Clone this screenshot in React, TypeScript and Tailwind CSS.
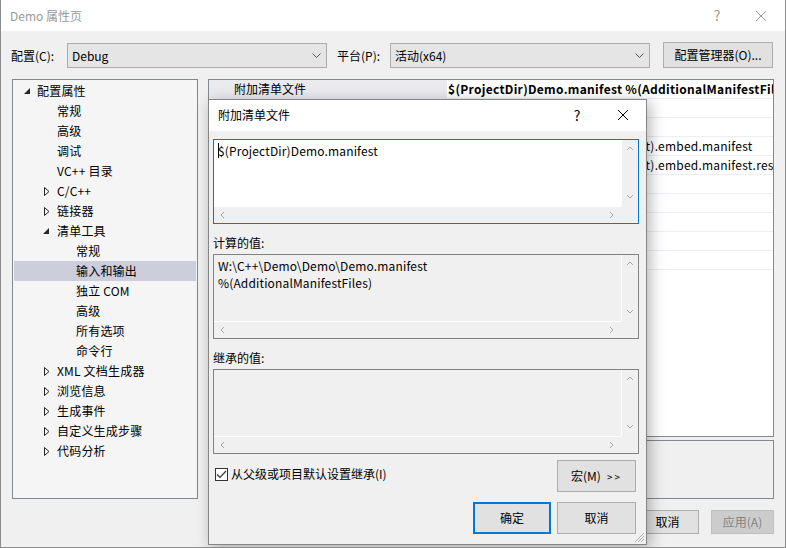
import React from "react";

const FONT = "font-['Noto_Sans_CJK_SC',sans-serif]";

function Chevron({ dir, color = "#a6a6a6" }: { dir: "up" | "down" | "left" | "right"; color?: string }) {
  const pts: Record<string, string> = {
    up: "1,5 4,2 7,5",
    down: "1,2 4,5 7,2",
    left: "5,1 2,4 5,7",
    right: "2,1 5,4 2,7",
  };
  return (
    <svg width="8" height="8" viewBox="0 0 8 8" className="block">
      <polyline points={pts[dir]} fill="none" stroke={color} strokeWidth="1" />
    </svg>
  );
}

function ComboChevron() {
  return (
    <svg width="9" height="6" viewBox="0 0 9 6" className="block">
      <polyline points="0.5,0.5 4.5,4.5 8.5,0.5" fill="none" stroke="#555" strokeWidth="1" />
    </svg>
  );
}

function TreeArrow({ kind }: { kind: "open" | "closed" }) {
  if (kind === "open") {
    return (
      <svg width="7" height="7" viewBox="0 0 7 7" className="block">
        <polygon points="6,0 6,6 0,6" fill="#262626" />
      </svg>
    );
  }
  return (
    <svg width="6" height="9" viewBox="0 0 6 9" className="block">
      <polygon points="0.5,0.5 5,4.5 0.5,8.5" fill="none" stroke="#262626" strokeWidth="1" />
    </svg>
  );
}

type TreeItem = { t: string; l: number; e?: "open" | "closed"; sel?: boolean };

const tree: TreeItem[] = [
  { t: "配置属性", l: 0, e: "open" },
  { t: "常规", l: 1 },
  { t: "高级", l: 1 },
  { t: "调试", l: 1 },
  { t: "VC++ 目录", l: 1 },
  { t: "C/C++", l: 1, e: "closed" },
  { t: "链接器", l: 1, e: "closed" },
  { t: "清单工具", l: 1, e: "open" },
  { t: "常规", l: 2 },
  { t: "输入和输出", l: 2, sel: true },
  { t: "独立 COM", l: 2 },
  { t: "高级", l: 2 },
  { t: "所有选项", l: 2 },
  { t: "命令行", l: 2 },
  { t: "XML 文档生成器", l: 1, e: "closed" },
  { t: "浏览信息", l: 1, e: "closed" },
  { t: "生成事件", l: 1, e: "closed" },
  { t: "自定义生成步骤", l: 1, e: "closed" },
  { t: "代码分析", l: 1, e: "closed" },
];

const padClass = ["pl-[10px]", "pl-[29px]", "pl-[48px]"];

const rows: { n: string; v: string; bold?: boolean }[] = [
  { n: "附加清单文件", v: "$(ProjectDir)Demo.manifest %(AdditionalManifestFiles)", bold: true },
  { n: "输入资源清单", v: "" },
  { n: "嵌入清单", v: "是" },
  { n: "输出清单文件", v: "$(IntDir)$(TargetName)$(TargetExt).embed.manifest" },
  { n: "清单资源文件", v: "$(IntDir)$(TargetName)$(TargetExt).embed.manifest.res" },
  { n: "生成目录文件", v: "否" },
  { n: "从托管程序集生成清单", v: "" },
  { n: "禁止从默认清单的依赖项元素", v: "否" },
  { n: "启用 DPI 识别功能", v: "" },
  { n: "", v: "" },
];

function ScrollBox({
  white,
  focused,
  lines,
  caret,
}: {
  white?: boolean;
  focused?: boolean;
  lines: string[];
  caret?: boolean;
}) {
  return (
    <div
      className={`h-[85px] border grid grid-cols-[1fr_17px] grid-rows-[1fr_17px] ${
        focused ? "border-[#0078d7]" : "border-[#828282]"
      } ${white ? "bg-white" : "bg-[#f0f0f0]"}`}
    >
      <div className="pl-[4px] pt-[2px] text-[12px] leading-[17px] tracking-[0.15px] text-black overflow-hidden whitespace-nowrap">
        {lines.map((l, i) => (
          <div key={i} className="relative">
            {caret && i === 0 && (
              <span className="absolute left-0 top-[1px] w-px h-[15px] bg-black" />
            )}
            {l}
          </div>
        ))}
      </div>
      <div className="bg-[#f0f0f0] border-l border-white flex flex-col items-center justify-between py-[5px]">
        <Chevron dir="up" />
        <Chevron dir="down" />
      </div>
      <div className="bg-[#f0f0f0] border-t border-white flex items-center justify-between px-[5px]">
        <Chevron dir="left" />
        <Chevron dir="right" />
      </div>
      <div className="bg-[#f0f0f0]" />
    </div>
  );
}

export default function App() {
  return (
    <div
      className={`relative w-[786px] h-[548px] overflow-hidden bg-[#f0f0f0] border-x border-b border-[#8c8c8c] text-[12px] text-black ${FONT}`}
    >
      {/* Title bar */}
      <div className="h-[31px] bg-white flex items-center pl-[9px] text-[#999999]">
        <span className="flex-1">Demo 属性页</span>
        <span className="w-[20px] text-center text-[14px] mr-[28px]">?</span>
        <svg width="12" height="12" viewBox="0 0 12 12" className="mr-[18px]">
          <path d="M1 1 L11 11 M11 1 L1 11" stroke="#999" strokeWidth="1" />
        </svg>
      </div>

      {/* Toolbar */}
      <div className="flex items-center h-[25px] mt-[12px] pl-[10px]">
        <span className="w-[56px]">配置(C):</span>
        <div className="w-[260px] h-[25px] bg-[#e5e5e5] border border-[#acacac] flex items-center pl-[4px] pr-[5px]">
          <span className="flex-1">Debug</span>
          <ComboChevron />
        </div>
        <span className="ml-[10px] w-[53px]">平台(P):</span>
        <div className="w-[260px] h-[25px] bg-[#e5e5e5] border border-[#acacac] flex items-center pl-[4px] pr-[5px]">
          <span className="flex-1">活动(x64)</span>
          <ComboChevron />
        </div>
        <div className="ml-[13px] w-[110px] h-[26px] -mt-[1px] bg-[#e1e1e1] border border-[#adadad] flex items-center justify-center">
          配置管理器(O)...
        </div>
      </div>

      {/* Main */}
      <div className="flex mt-[11px] pl-[11px]">
        <div className="w-[186px] h-[420px] bg-[#f5f5f5] border border-[#828790] pt-[1px] px-px">
          {tree.map((it, i) => (
            <div
              key={i}
              className={`h-[20px] flex items-center ${padClass[it.l]} ${it.sel ? "bg-[#cccedb]" : ""}`}
            >
              <span className="w-[15px] flex items-center">
                {it.e === "open" && <TreeArrow kind="open" />}
                {it.e === "closed" && <span className="ml-[1px]"><TreeArrow kind="closed" /></span>}
              </span>
              <span className={`tracking-[0.2px] ${it.l === 0 ? "ml-[-2px]" : "ml-[-1px]"}`}>{it.t}</span>
            </div>
          ))}
        </div>

        <div className="ml-[10px] w-[566px] flex flex-col">
          <div className="h-[358px] bg-white border border-[#828790] overflow-hidden">
            {rows.map((r, i) => (
              <div key={i} className="h-[19px] flex border-b border-[#eceef4]">
                <div
                  className={`w-[238px] shrink-0 pl-[25px] leading-[18px] ${
                    i === 0 ? "bg-[#ebebef]" : ""
                  }`}
                >
                  {r.n}
                </div>
                <div
                  className={`flex-1 leading-[18px] whitespace-nowrap overflow-hidden ${
                    r.bold ? "pl-[1px] font-bold tracking-[0.3px]" : "pl-[4px] tracking-[0.22px]"
                  }`}
                >
                  {r.v}
                </div>
              </div>
            ))}
          </div>
          <div className="mt-[3px] h-[59px] border border-[#828790] bg-[#f0f0f0]" />
        </div>
      </div>

      {/* Bottom buttons */}
      <div className="flex justify-end gap-[12px] mt-[11px] pr-[11px]">
        <div className="w-[63px] h-[24px] bg-[#e1e1e1] border border-[#adadad] flex items-center justify-center">确定</div>
        <div className="w-[63px] h-[24px] bg-[#e1e1e1] border border-[#adadad] flex items-center justify-center">取消</div>
        <div className="w-[63px] h-[24px] bg-[#cccccc] border border-[#bfbfbf] flex items-center justify-center text-[#838383]">
          应用(A)
        </div>
      </div>

      {/* Dialog */}
      <div className="absolute left-[207px] top-[99px] w-[439px] h-[446px] bg-[#f0f0f0] border border-[#858585] shadow-[3px_3px_14px_rgba(0,0,0,0.3)] flex flex-col">
        <div className="h-[31px] bg-white flex items-center pl-[9px] pb-[1px]">
          <span className="flex-1">附加清单文件</span>
          <span className="w-[20px] text-center text-[14px] mr-[30px]">?</span>
          <svg width="12" height="12" viewBox="0 0 12 12" className="mr-[17px]">
            <path d="M1 1 L11 11 M11 1 L1 11" stroke="#000" strokeWidth="1" />
          </svg>
        </div>
        <div className="flex flex-col pl-[4px] pr-[7px] pt-[8px]">
          <ScrollBox white focused caret lines={["$(ProjectDir)Demo.manifest"]} />
          <div className="h-[30px] pt-[10px] leading-[17px]">计算的值:</div>
          <ScrollBox lines={["W:\\C++\\Demo\\Demo\\Demo.manifest", "%(AdditionalManifestFiles)"]} />
          <div className="h-[30px] pt-[10px] leading-[17px]">继承的值:</div>
          <ScrollBox lines={[]} />
          <div className="flex items-start mt-[6px]">
            <div className="flex items-center flex-1 pt-[5px] pl-[2px]">
              <div className="w-[13px] h-[13px] bg-white border border-[#333333] flex items-center justify-center">
                <svg width="11" height="9" viewBox="0 0 11 9" className="block">
                  <polyline points="1,4.5 4,7.5 10,1" fill="none" stroke="#333" strokeWidth="1.2" />
                </svg>
              </div>
              <span className="ml-[3px]">从父级或项目默认设置继承(I)</span>
            </div>
            <div className="w-[79px] h-[32px] mr-[3px] bg-[#e1e1e1] border border-[#adadad] flex items-center justify-center">
              宏(M) <span className="ml-[6px] text-[10px] tracking-[2px]">&gt;&gt;</span>
            </div>
          </div>
          <div className="flex justify-end gap-[6px] mt-[10px] mr-[3px]">
            <div className="w-[78px] h-[32px] bg-[#e1e1e1] border-2 border-[#0078d7] flex items-center justify-center">
              确定
            </div>
            <div className="w-[79px] h-[32px] bg-[#e1e1e1] border border-[#adadad] flex items-center justify-center">
              取消
            </div>
          </div>
        </div>
        <svg width="10" height="10" viewBox="0 0 10 10" className="absolute right-[1px] bottom-[1px]">
          <path d="M9 3 L3 9 M9 6 L6 9 M9 0 L0 9" stroke="#b0b0b0" strokeWidth="1" />
        </svg>
      </div>
    </div>
  );
}
